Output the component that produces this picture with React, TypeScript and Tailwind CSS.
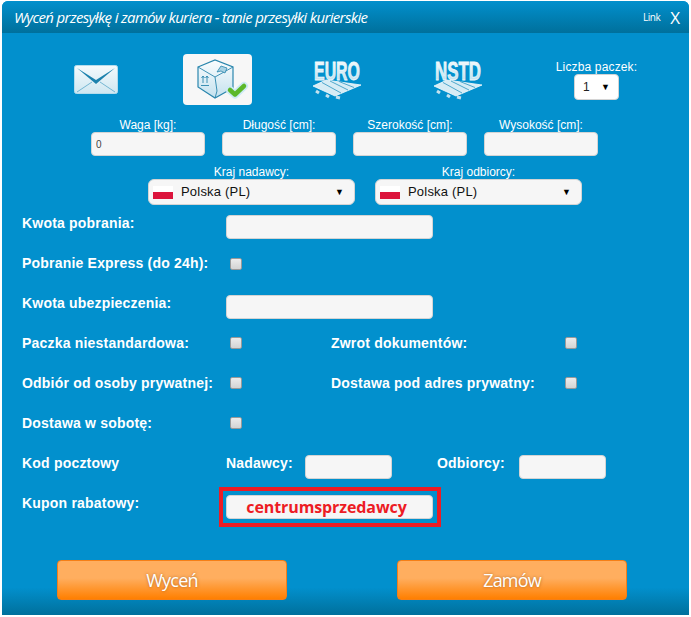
const font = "font-['Liberation_Sans',Arial,sans-serif]";

function TextInput({ className = "", value = "" }: { className?: string; value?: string }) {
  return (
    <input
      readOnly
      value={value}
      className={`h-6 rounded border border-[#d4d4d4] bg-[#f6f6f6] px-1 text-[10px] text-[#444] outline-none ${className}`}
    />
  );
}

function Checkbox() {
  return <span className="block h-3 w-3 rounded-[2px] border border-[#9a9a9a] bg-gradient-to-b from-[#ececec] to-[#d4d4d4]" />;
}

function Flag() {
  return (
    <span className="flex h-[13px] w-5 flex-col">
      <span className="h-1/2 bg-white" />
      <span className="h-1/2 bg-[#dc143c]" />
    </span>
  );
}

function CountrySelect({ label }: { label: string }) {
  return (
    <div className="flex w-[207px] flex-col items-center">
      <span className="h-[14px] text-xs leading-[14px] text-white">{label}</span>
      <div className="flex h-[26px] w-full items-center rounded-md border border-[#d4d4d4] bg-[#f6f6f6] pl-[4px] pr-[10px] text-[13px] text-[#111]">
        <Flag />
        <span className="ml-[8px] flex-1 tracking-[0.2px]">Polska (PL)</span>
        <span className="text-[9px] leading-none text-black">▼</span>
      </div>
    </div>
  );
}

function Dimension({ label, value }: { label: string; value?: string }) {
  return (
    <div className="flex w-[114px] flex-col items-center">
      <span className="h-[14px] text-xs leading-[14px] text-white">{label}</span>
      <TextInput className="w-full" value={value} />
    </div>
  );
}

function Label({ children, className = "" }: { children: string; className?: string }) {
  return <span className={`whitespace-nowrap text-[14px] font-bold leading-4 tracking-[0.2px] text-white ${className}`}>{children}</span>;
}

function Envelope() {
  return (
    <svg width="44" height="29" viewBox="0 0 44 29">
      <defs>
        <linearGradient id="env" x1="0" y1="0" x2="0" y2="1">
          <stop offset="0" stopColor="#f4fafc" />
          <stop offset="1" stopColor="#cfe7f1" />
        </linearGradient>
      </defs>
      <rect x="0.5" y="0.5" width="43" height="28" rx="2" fill="url(#env)" stroke="#b5dcec" />
      <path d="M3 3 L22 15 L41 3 L22 19Z" fill="#1c82ad" />
      <path d="M3 27 L18 17 M41 27 L26 17" stroke="#5aa8c9" strokeWidth="0.8" />
    </svg>
  );
}

function Parcel() {
  return (
    <svg width="52" height="42" viewBox="0 0 52 42">
      <defs>
        <linearGradient id="box" x1="0" y1="0" x2="0" y2="1">
          <stop offset="0" stopColor="#fbfdfe" />
          <stop offset="1" stopColor="#c3e1ee" />
        </linearGradient>
      </defs>
      <path d="M1 8 L18 1 L36 8 L36 29 L18 39 L1 28Z" fill="url(#box)" stroke="#2a86ad" strokeWidth="1.2" />
      <path d="M1 8 L18 18 L36 8 M18 18 L20 32 L18 39" fill="none" stroke="#2a86ad" strokeWidth="0.9" />
      <path d="M6 17 V24 M4.500 19 L6 17 L7.500 19 M10 17 V24 M8.500 19 L10 17 L11.500 19 M4 26.500 H12" fill="none" stroke="#2a86ad" strokeWidth="0.9" />
      <path d="M20 13 L24 7 L30 9 L28 14 L24 12Z" fill="#a9d2e4" stroke="#2a86ad" strokeWidth="0.8" />
      <path d="M33 31 L38 35.500 L47 27" fill="none" stroke="#cdeaf5" strokeWidth="8" strokeLinecap="round" strokeLinejoin="round" />
      <path d="M33 31 L38 35.500 L47 27" fill="none" stroke="#5cb82a" strokeWidth="4.500" strokeLinecap="round" strokeLinejoin="round" />
    </svg>
  );
}

function Pallet({ label, idSuffix, stretch }: { label: string; idSuffix: string; stretch: number }) {
  return (
    <svg width="49" height="39" viewBox="0 0 49 39" className="overflow-visible">
      <defs>
        <linearGradient id={`pallet-${idSuffix}`} x1="0" y1="0" x2="0" y2="1">
          <stop offset="0" stopColor="#ffffff" />
          <stop offset="1" stopColor="#b4dcec" />
        </linearGradient>
      </defs>
      <text
        transform={`translate(24 19.500) scale(${stretch} 1)`}
        textAnchor="middle"
        fontFamily="Liberation Sans, Arial, sans-serif"
        fontWeight="700"
        fontSize="26"
        fill={`url(#pallet-${idSuffix})`}
        stroke="#eef8fc"
        strokeWidth="0.8"
      >
        {label}
      </text>
      <path d="M3 31 L6 33 M13 35 L16 37 M23 37 L27 38" stroke="#c3e1ee" strokeWidth="3" />
      <path d="M0 26 L13 20 L48 25 L22 36Z" fill="#d6ecf5" stroke="#f4fafc" strokeWidth="0.8" />
      <path d="M9 22.500 L28 33 M17 21 L35 30 M26 21.500 L41 27.500" stroke="#3f9fc6" strokeWidth="0.9" />
    </svg>
  );
}

function OrangeButton({ children }: { children: string }) {
  return (
    <button className="flex h-10 w-[230px] items-center justify-center rounded border border-[#f57f17] bg-[linear-gradient(#ffae5f_0%,#ffae5f_45%,#ff7f00_100%)] font-['Open_Sans',sans-serif] text-[18px] tracking-[-0.8px] text-white [text-shadow:0_0_3px_rgba(120,60,0,0.6)]">
      {children}
    </button>
  );
}

export default function App() {
  return (
    <div className={`h-[617px] w-[691px] bg-white pl-[2px] pr-[2px] pt-[1px] ${font}`}>
      <div className="flex h-[614px] w-[687px] flex-col overflow-hidden rounded-t-md bg-[#0290cd]">
        {/* Header */}
        <div className="flex h-8 shrink-0 items-center justify-between bg-gradient-to-b from-[#0290cd] to-[#00709c] pl-3 pr-[9px]">
          <span className="font-['Open_Sans',sans-serif] text-[15px] italic tracking-[-0.65px] text-white">
            Wyceń przesyłkę i zamów kuriera - tanie przesyłki kurierskie
          </span>
          <div className="flex items-center gap-[10px] font-['Open_Sans',sans-serif] text-white">
            <span className="text-[10px] tracking-[-0.5px]">Link</span>
            <span className="text-[17px] leading-none">X</span>
          </div>
        </div>

        {/* Package types */}
        <div className="relative mt-[21px] flex h-[51px] shrink-0 items-center pl-[72px]">
          <Envelope />
          <div className="ml-[65px] flex h-[51px] w-[69px] items-start rounded bg-[#f7f7f7] pl-[14px] pt-[5px]">
            <Parcel />
          </div>
          <div className="ml-[61px] self-start pt-[6px]"><Pallet label="EURO" idSuffix="euro" stretch={0.61} /></div>
          <div className="ml-[72px] self-start pt-[6px]"><Pallet label="NSTD" idSuffix="nstd" stretch={0.65} /></div>
          <div className="ml-[73px] flex w-[81px] flex-col items-center self-start pt-[6px]">
            <span className="h-[14px] whitespace-nowrap text-xs leading-[14px] tracking-[0.15px] text-white">Liczba paczek:</span>
            <div className="flex h-[26px] w-[45px] items-center justify-between rounded border border-[#d4d4d4] bg-white pl-[8px] pr-[8px] text-xs text-[#222]">
              <span>1</span>
              <span className="text-[9px] leading-none text-black">▼</span>
            </div>
          </div>
        </div>

        {/* Dimensions */}
        <div className="mt-[13px] flex shrink-0 gap-[17px] pl-[89px]">
          <Dimension label="Waga [kg]:" value="0" />
          <Dimension label="Długość [cm]:" />
          <Dimension label="Szerokość [cm]:" />
          <Dimension label="Wysokość [cm]:" />
        </div>

        {/* Countries */}
        <div className="mt-[9px] flex shrink-0 gap-5 pl-[146px]">
          <CountrySelect label="Kraj nadawcy:" />
          <CountrySelect label="Kraj odbiorcy:" />
        </div>

        {/* Form */}
        <div className="mt-[10px] flex flex-col pl-5">
          <div className="flex h-6 items-center">
            <Label className="w-[204px] pb-2">Kwota pobrania:</Label>
            <TextInput className="w-[207px]" />
          </div>
          <div className="mt-[13px] flex h-6 items-center">
            <Label className="w-[208px] pb-[2px]">Pobranie Express (do 24h):</Label>
            <Checkbox />
          </div>
          <div className="mt-[19px] flex h-6 items-center">
            <Label className="w-[204px] pb-2">Kwota ubezpieczenia:</Label>
            <TextInput className="w-[207px]" />
          </div>
          <div className="mt-[12px] flex h-6 items-center">
            <Label className="w-[208px]">Paczka niestandardowa:</Label>
            <Checkbox />
            <Label className="ml-[89px] w-[234px]">Zwrot dokumentów:</Label>
            <Checkbox />
          </div>
          <div className="mt-[16px] flex h-6 items-center">
            <Label className="w-[208px]">Odbiór od osoby prywatnej:</Label>
            <Checkbox />
            <Label className="ml-[89px] w-[234px]">Dostawa pod adres prywatny:</Label>
            <Checkbox />
          </div>
          <div className="mt-[16px] flex h-6 items-center">
            <Label className="w-[208px]">Dostawa w sobotę:</Label>
            <Checkbox />
          </div>
          <div className="mt-[20px] flex h-6 items-center">
            <Label className="w-[204px] pb-2">Kod pocztowy</Label>
            <Label className="w-[79px] pb-2">Nadawcy:</Label>
            <TextInput className="w-[87px]" />
            <Label className="ml-[45px] w-[82px] pb-2">Odbiorcy:</Label>
            <TextInput className="w-[87px]" />
          </div>
          <div className="mt-[8px] flex h-10 items-center">
            <Label className="w-[197px] pb-2">Kupon rabatowy:</Label>
            <div className="border-4 border-[#ed1c24] py-[4px] pl-[3px] pr-[4px]">
              <div className="flex h-6 w-[207px] items-center justify-center rounded border border-[#d4d4d4] bg-[#f6f6f6] pr-[6px] font-['Open_Sans',sans-serif] text-[16px] font-bold tracking-[-0.1px] text-[#ed1c24]">
                centrumsprzedawcy
              </div>
            </div>
          </div>
        </div>

        {/* Actions */}
        <div className="mt-auto flex h-[55px] shrink-0 items-start bg-[linear-gradient(#0290cd_0%,#0290cd_50%,#00709c_100%)] pl-[55px]">
          <OrangeButton>Wyceń</OrangeButton>
          <div className="ml-[110px]">
            <OrangeButton>Zamów</OrangeButton>
          </div>
        </div>
      </div>
    </div>
  );
}
